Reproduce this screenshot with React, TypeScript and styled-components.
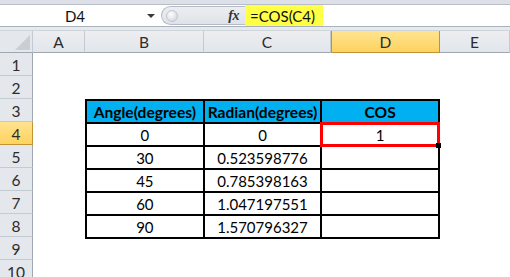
import React from 'react';
import styled, { createGlobalStyle } from 'styled-components';

const GlobalStyle = createGlobalStyle`
  html, body {
    margin: 0;
    padding: 0;
    background: #ffffff;
  }
  body {
    font-family: Lato, "Liberation Sans", sans-serif;
  }
`;

const columns = ['A', 'B', 'C', 'D', 'E'];
const activeColumn = 'D';
const activeRow = 4;
const rowCount = 10;

const tableHead = ['Angle(degrees)', 'Radian(degrees)', 'COS'];
const tableRows = [
  ['0', '0', '1'],
  ['30', '0.523598776', ''],
  ['45', '0.785398163', ''],
  ['60', '1.047197551', ''],
  ['90', '1.570796327', ''],
];

const App = () => {
  return (
    <Window>
      <GlobalStyle />
      <TopStrip />
      <FormulaBar>
        <NameBox>
          <NameText>D4</NameText>
          <DropArrow />
        </NameBox>
        <FxPill>
          <PillKnob />
          <FxLabel>fx</FxLabel>
        </FxPill>
        <FormulaInput>
          <FormulaText>=COS(C4)</FormulaText>
        </FormulaInput>
      </FormulaBar>
      <BarGap />

      <Sheet>
        <Corner>
          <CornerTriangle />
        </Corner>
        {columns.map((col) => (
          <ColHeader key={col} $active={col === activeColumn}>
            {col}
          </ColHeader>
        ))}

        {Array.from({ length: rowCount }, (_, i) => i + 1).map((row) => (
          <RowHeader key={row} style={{ gridRow: row + 1 }} $active={row === activeRow}>
            {row}
          </RowHeader>
        ))}

        <DataTable>
          <tbody>
            <tr>
              {tableHead.map((h) => (
                <HeadCell key={h}>{h}</HeadCell>
              ))}
            </tr>
            {tableRows.map((r, ri) => (
              <tr key={ri}>
                {r.map((v, ci) => (
                  <BodyCell key={ci} $selected={ri === 0 && ci === 2}>
                    {v}
                  </BodyCell>
                ))}
              </tr>
            ))}
          </tbody>
        </DataTable>
      </Sheet>
    </Window>
  );
};

export default App;

const Window = styled.div`
  width: 510px;
  height: 277px;
  overflow: hidden;
  background: #ffffff;
  font-family: Lato, "Liberation Sans", sans-serif;
`;

const TopStrip = styled.div`
  height: 4px;
  background: #dde1e7;
  border-bottom: 1px solid #b7bec8;
`;

const FormulaBar = styled.div`
  display: flex;
  height: 21px;
  background: #ffffff;
  border-bottom: 1px solid #aab2bd;
`;

const NameBox = styled.div`
  position: relative;
  width: 158px;
  display: flex;
  align-items: center;
  justify-content: center;
`;

const NameText = styled.span`
  font-size: 15px;
  color: #111;
  margin-left: 8px;
  margin-right: 16px;
  width: 130px;
  text-align: center;
`;

const DropArrow = styled.span`
  position: absolute;
  right: 3px;
  top: 9px;
  width: 0;
  height: 0;
  border-left: 4px solid transparent;
  border-right: 4px solid transparent;
  border-top: 4px solid #3a3a3a;
`;

const FxPill = styled.div`
  width: 84px;
  margin: 1px 0 1px 3px;
  display: flex;
  align-items: center;
  justify-content: space-between;
  background: linear-gradient(#eceef1, #dfe2e7);
  border: 1px solid #b4bbc5;
  border-right: none;
  border-radius: 10px 0 0 10px;
  box-sizing: border-box;
  padding: 0 6px 0 4px;
`;

const PillKnob = styled.span`
  width: 10px;
  height: 10px;
  border-radius: 50%;
  background: radial-gradient(circle at 40% 35%, #ffffff, #c9ced6);
  border: 1px solid #c2c8d0;
`;

const FxLabel = styled.span`
  font-family: "Liberation Serif", serif;
  font-style: italic;
  font-weight: bold;
  font-size: 14px;
  color: #333;
  letter-spacing: -0.5px;
`;

const FormulaInput = styled.div`
  flex: 1;
  display: flex;
  align-items: center;
`;

const FormulaText = styled.span`
  background: #ffff45;
  height: 100%;
  display: flex;
  align-items: center;
  padding: 0 5px 0 5px;
  width: 68px;
  font-size: 15px;
  color: #111;
`;

const BarGap = styled.div`
  height: 3px;
  background: #e6e9ed;
  border-bottom: 1px solid #cfd4da;
`;

const Sheet = styled.div`
  display: grid;
  grid-template-columns: 33px 52px 119px 127px 109px 70px;
  grid-template-rows: 22px repeat(10, 23px);
`;

const headerBase = `
  display: flex;
  align-items: center;
  justify-content: center;
  font-size: 15.5px;
  color: #2c2c2c;
  box-sizing: border-box;
  padding-top: 1px;
`;

const Corner = styled.div`
  ${headerBase}
  position: relative;
  background: #e4e7eb;
  border-right: 1px solid #c4cad2;
  border-bottom: 1px solid #9ea6b2;
`;

const CornerTriangle = styled.span`
  position: absolute;
  right: 2px;
  bottom: 2px;
  width: 0;
  height: 0;
  border-left: 15px solid transparent;
  border-bottom: 15px solid #c9ced5;
`;

const ColHeader = styled.div<{ $active: boolean }>`
  ${headerBase}
  background: ${(p) =>
    p.$active ? 'linear-gradient(#ffe38f, #fdd35f)' : 'linear-gradient(#eceef1, #e2e5ea)'};
  border-right: 1px solid ${(p) => (p.$active ? '#c39236' : '#c4cad2')};
  border-left: ${(p) => (p.$active ? '1px solid #c39236' : 'none')};
  border-bottom: 1px solid ${(p) => (p.$active ? '#c39236' : '#9ea6b2')};
`;

const RowHeader = styled.div<{ $active: boolean }>`
  ${headerBase}
  grid-column: 1;
  background: ${(p) => (p.$active ? 'linear-gradient(#ffe38f, #fdd35f)' : '#e4e7eb')};
  border-right: 1px solid ${(p) => (p.$active ? '#c39236' : '#9ea6b2')};
  border-bottom: 1px solid ${(p) => (p.$active ? '#c39236' : '#c4cad2')};
`;

const DataTable = styled.table`
  grid-column: 3 / 6;
  grid-row: 4 / 10;
  border-collapse: collapse;
  width: 100%;
  height: 100%;
  table-layout: fixed;
  font-size: 15px;
  color: #000;
`;

const HeadCell = styled.td`
  background: #00b0f0;
  font-weight: bold;
  font-size: 15.6px;
  text-align: center;
  border: 2px solid #000;
  padding: 1px 0 0;
  height: 23px;
  box-sizing: border-box;
  white-space: nowrap;
`;

const BodyCell = styled.td<{ $selected: boolean }>`
  position: relative;
  text-align: center;
  border: 2px solid #000;
  padding: 1px 0 0;
  height: 23px;
  box-sizing: border-box;
  outline: ${(p) => (p.$selected ? '3px solid #ff0000' : 'none')};
  outline-offset: -2px;

  &::after {
    content: '';
    display: ${(p) => (p.$selected ? 'block' : 'none')};
    position: absolute;
    right: -3px;
    bottom: -3px;
    width: 5px;
    height: 5px;
    background: #000;
  }
`;
